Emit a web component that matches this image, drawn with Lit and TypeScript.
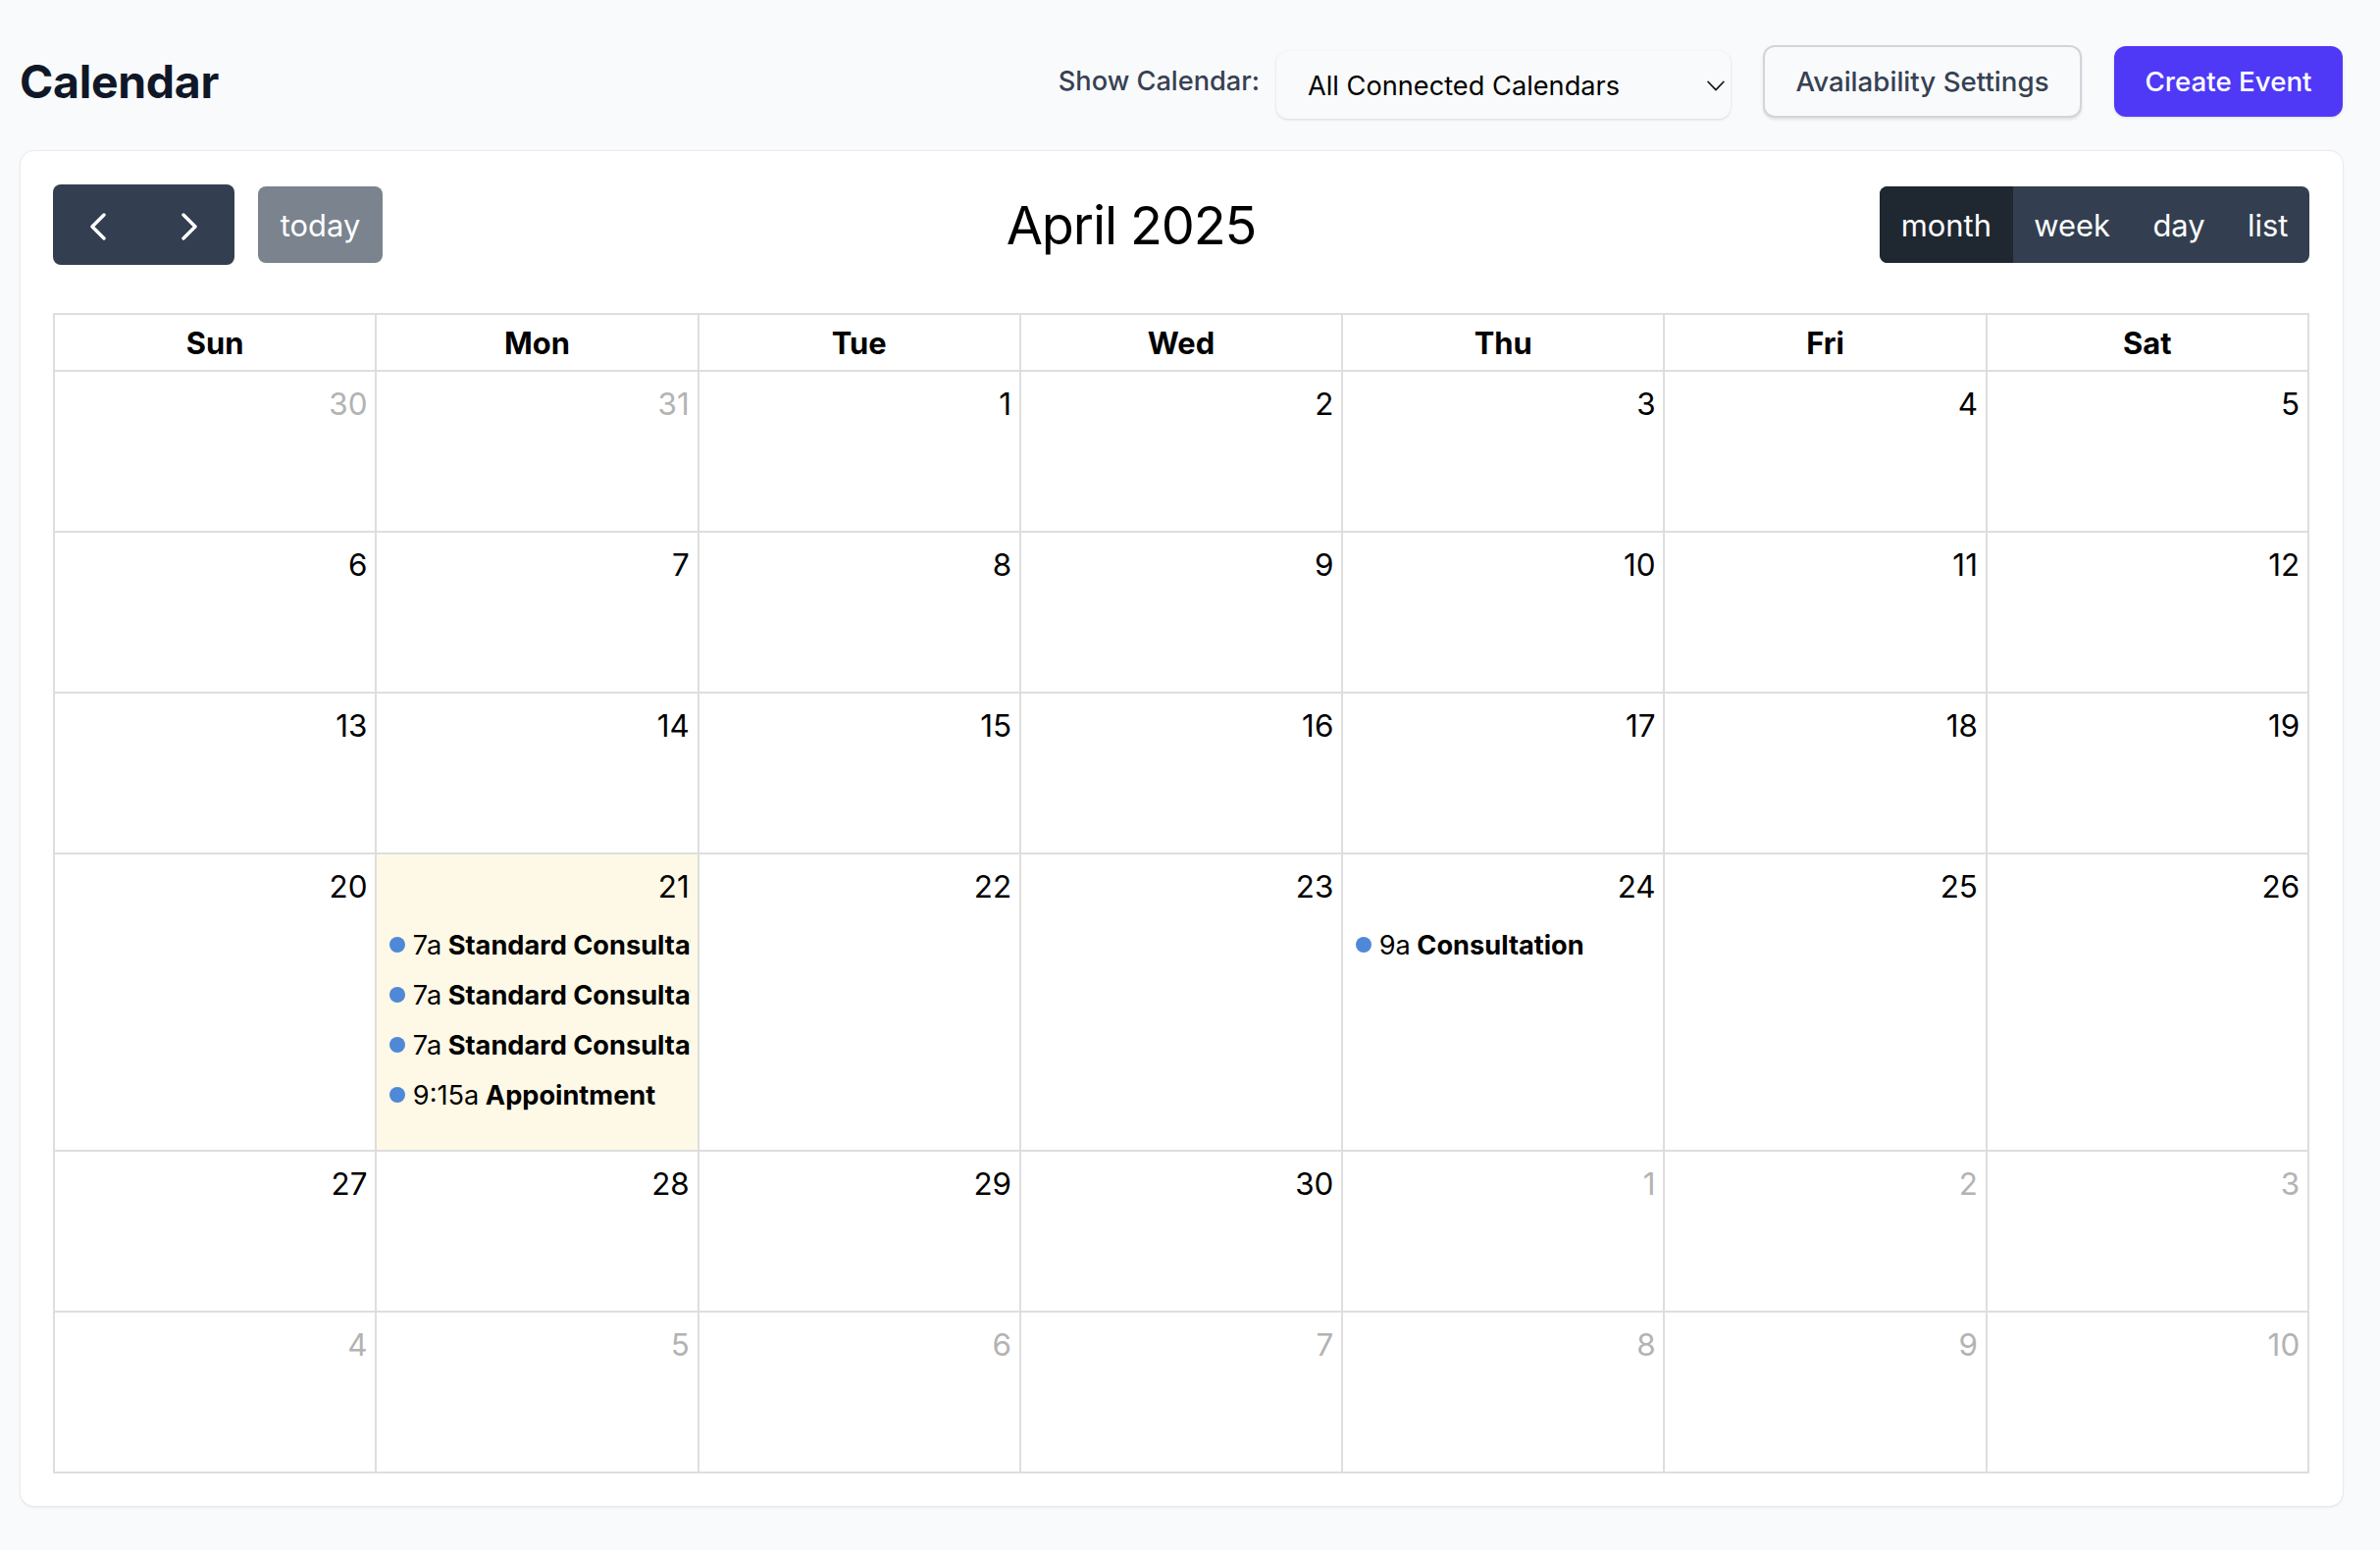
import { LitElement, html, css, svg } from "lit";
import { customElement } from "lit/decorators.js";
import { classMap } from "lit/directives/class-map.js";

type Cell = { n: number; other?: boolean; today?: boolean; events?: [string, string][] };

const std: [string, string] = ["7a", "Standard Consultation"];
const rows: Cell[][] = [
  [{ n: 30, other: true }, { n: 31, other: true }, { n: 1 }, { n: 2 }, { n: 3 }, { n: 4 }, { n: 5 }],
  [6, 7, 8, 9, 10, 11, 12].map((n) => ({ n })),
  [13, 14, 15, 16, 17, 18, 19].map((n) => ({ n })),
  [
    { n: 20 },
    { n: 21, today: true, events: [std, std, std, ["9:15a", "Appointment"]] },
    { n: 22 },
    { n: 23 },
    { n: 24, events: [["9a", "Consultation"]] },
    { n: 25 },
    { n: 26 },
  ],
  [{ n: 27 }, { n: 28 }, { n: 29 }, { n: 30 }, { n: 1, other: true }, { n: 2, other: true }, { n: 3, other: true }],
  [4, 5, 6, 7, 8, 9, 10].map((n) => ({ n, other: true })),
];
const days = ["Sun", "Mon", "Tue", "Wed", "Thu", "Fri", "Sat"];

const chevron = (d: string) => html`<svg class="chev" viewBox="0 0 18 28" width="18" height="28">
  ${svg`<path d=${d} fill="none" stroke="#fff" stroke-width="3.4" stroke-linecap="round" stroke-linejoin="round"/>`}
</svg>`;

@customElement("app-root")
export class AppRoot extends LitElement {
  static styles = css`
    :host {
      display: block;
      min-height: 1580px;
      background: #f9fafb;
      font-family: Inter, "Liberation Sans", sans-serif;
      color: #000;
      box-sizing: border-box;
      padding: 45px 38px 0 20px;
    }
    * { box-sizing: border-box; }
    .header {
      display: flex;
      align-items: center;
      justify-content: space-between;
      height: 76px;
      margin-bottom: 33px;
    }
    h1 {
      margin: 2px 0 0;
      font-size: 46.4px;
      font-weight: 700;
      color: #101828;
      line-height: 1.2;
      letter-spacing: -0.3px;
    }
    .controls { display: flex; align-items: center; }
    .label {
      font-size: 27.2px;
      font-weight: 500;
      color: #364153;
      margin-right: 17px;
      margin-bottom: 2px;
    }
    .select-wrap {
      position: relative;
      width: 463px;
      height: 69px;
      margin-top: 7px;
      margin-right: 33px;
    }
    select {
      appearance: none;
      width: 100%;
      height: 100%;
      border: none;
      outline: none;
      border-radius: 12px;
      background: #f9fafb;
      box-shadow: 0 1px 3px rgba(0, 0, 0, 0.14);
      font: 400 27.2px Inter, sans-serif;
      color: #000;
      padding: 1px 32px 0;
    }
    .caret { position: absolute; right: 6px; top: 30px; }
    .btn {
      font-family: inherit;
      font-size: 27.7px;
      font-weight: 500;
      border-radius: 12px;
      padding: 0;
    }
    .avail {
      width: 325px;
      height: 74px;
      margin-right: 33px;
      color: #364153;
      background: #f9fafb;
      border: 2px solid #d1d5dc;
      box-shadow: 0 2px 3px rgba(0, 0, 0, 0.1);
    }
    .create {
      width: 233px;
      height: 72px;
      color: #fff;
      background: #4f39f6;
      border: none;
      box-shadow: 0 1px 3px rgba(0, 0, 0, 0.12);
    }
    .card {
      background: #fff;
      border-radius: 14px;
      box-shadow: 0 0 0 1px #e8eaed, 0 1px 3px rgba(0, 0, 0, 0.12);
      padding: 34px 34px 33px 33px;
      margin-left: 1px;
    }
    .toolbar {
      display: flex;
      align-items: center;
      justify-content: space-between;
      height: 82px;
      margin-bottom: 49px;
    }
    .left, .views, .nav { display: flex; align-items: center; }
    .nav {
      width: 185px;
      height: 82px;
      background: #333f50;
      border-radius: 8px;
      margin-right: 24px;
    }
    .nav span { flex: 1; display: flex; justify-content: center; padding-top: 4px; }
    .chev { display: block; }
    .today {
      display: flex;
      align-items: center;
      justify-content: center;
      width: 127px;
      height: 78px;
      background: #7a838e;
      border-radius: 8px;
      color: #fff;
      font-size: 30.9px;
    }
    h2 {
      margin: 2px 0 0;
      font-size: 54px;
      font-weight: 400;
      line-height: 1.2;
      letter-spacing: -1.1px;
    }
    .views {
      height: 78px;
      border-radius: 8px;
      overflow: hidden;
      background: #333f50;
      color: #fff;
      font-size: 30.9px;
    }
    .views span {
      height: 100%;
      display: flex;
      align-items: center;
      padding: 0 21.7px;
    }
    .views .on { background: #1f2731; }
    .grid {
      display: grid;
      grid-template-columns: repeat(7, minmax(0, 1fr));
      grid-template-rows: 58px 164px 164px 164px 303px 164px 164px;
      border-top: 2px solid #dedede;
      border-left: 2px solid #dedede;
    }
    .grid > div {
      border-right: 2px solid #dedede;
      border-bottom: 2px solid #dedede;
      min-width: 0;
    }
    .head {
      display: flex;
      align-items: center;
      justify-content: center;
      font-size: 30.9px;
      font-weight: 700;
    }
    .cell { padding: 14.5px 0 0 0; }
    .cell.today-cell { background: #fef9e6; }
    .num {
      text-align: right;
      font-size: 31.4px;
      padding-right: 7.8px;
      line-height: 37px;
    }
    .other .num { color: #b3b3b3; }
    .events { margin-top: 15px; padding-left: 12.5px; padding-right: 6.5px; }
    .ev {
      display: flex;
      align-items: center;
      height: 51px;
      font-size: 27.2px;
      white-space: nowrap;
      overflow: hidden;
    }
    .dot {
      flex: none;
      width: 16px;
      height: 16px;
      border-radius: 50%;
      background: #5088d8;
      margin-right: 8px;
    }
    .time { margin-right: 6.5px; }
    .title { font-weight: 700; }
  `;

  render() {
    return html`
      <div class="header">
        <h1>Calendar</h1>
        <div class="controls">
          <span class="label">Show Calendar:</span>
          <div class="select-wrap">
            <select><option>All Connected Calendars</option></select>
            <svg class="caret" width="18" height="12" viewBox="0 0 18 12">
              <path d="M1.2 1.5 9 9.6l7.8-8.1" fill="none" stroke="#1a1a1a" stroke-width="1.8" stroke-linecap="round" stroke-linejoin="round" />
            </svg>
          </div>
          <button class="btn avail">Availability Settings</button>
          <button class="btn create">Create Event</button>
        </div>
      </div>
      <div class="card">
        <div class="toolbar">
          <div class="left">
            <div class="nav">
              <span>${chevron("M15 2 3 14l12 12")}</span>
              <span>${chevron("M3 2 15 14 3 26")}</span>
            </div>
            <div class="today">today</div>
          </div>
          <h2>April 2025</h2>
          <div class="views">
            <span class="on">month</span><span>week</span><span>day</span><span>list</span>
          </div>
        </div>
        <div class="grid">
          ${days.map((d) => html`<div class="head">${d}</div>`)}
          ${rows.flat().map(
            (c) => html`<div class=${classMap({ cell: true, other: !!c.other, "today-cell": !!c.today })}>
              <div class="num">${c.n}</div>
              ${c.events
                ? html`<div class="events">
                    ${c.events.map(
                      ([t, name]) => html`<div class="ev">
                        <i class="dot"></i><span class="time">${t}</span><b class="title">${name}</b>
                      </div>`
                    )}
                  </div>`
                : ""}
            </div>`
          )}
        </div>
      </div>
    `;
  }
}
